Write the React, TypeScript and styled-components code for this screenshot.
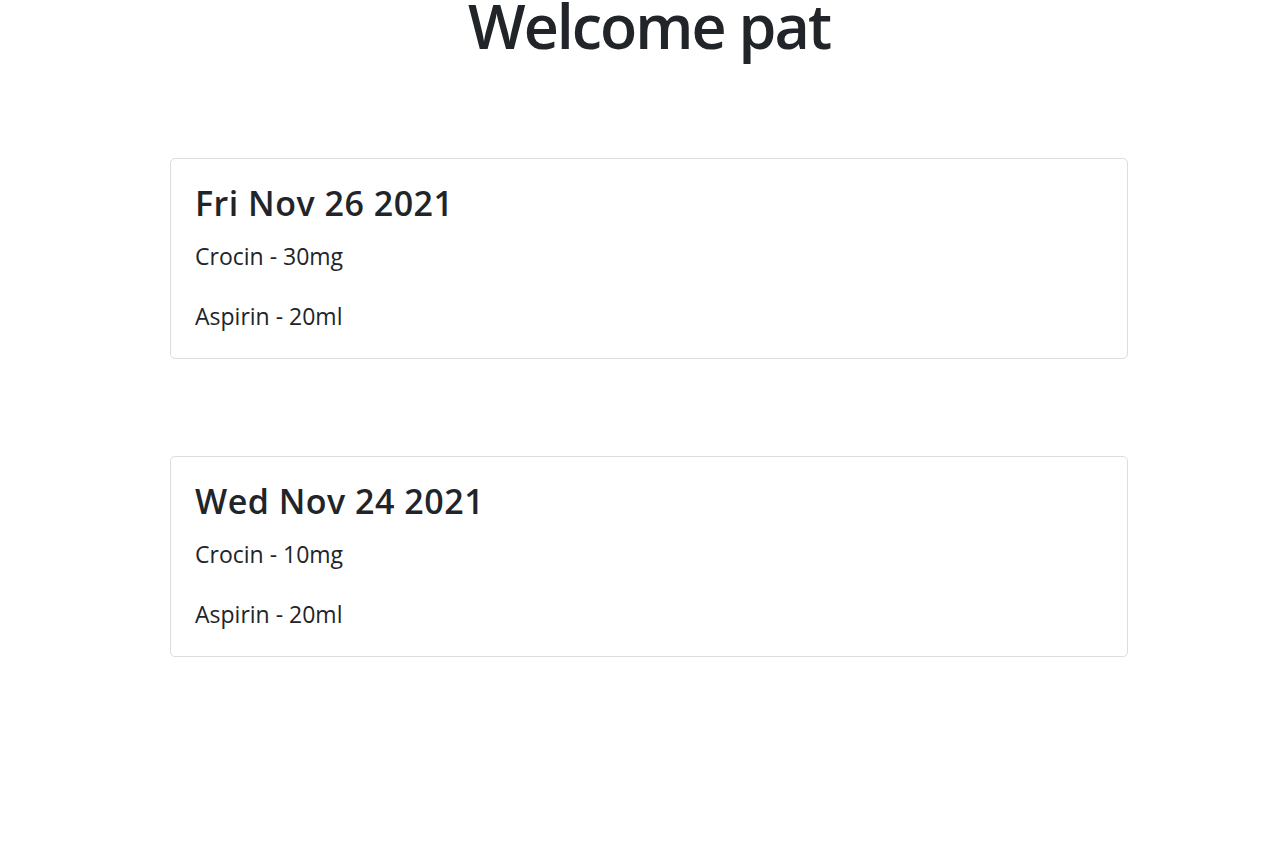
import React from "react";
import styled, { createGlobalStyle } from "styled-components";

const Global = createGlobalStyle`
  html, body { margin: 0; padding: 0; background: #fff; }
  body {
    font-family: "Open Sans", "Noto Sans", sans-serif;
    color: #212529;
    -webkit-font-smoothing: antialiased;
  }
`;

const Page = styled.div`
  padding-left: 18px;
  display: flex;
  justify-content: center;
`;

const Content = styled.div`
  width: 958px;
  display: flex;
  flex-direction: column;
`;

const Title = styled.h1`
  margin: 0;
  font-size: 61px;
  font-weight: 600;
  line-height: 52px;
  text-align: center;
  letter-spacing: -2px;
`;

const List = styled.div`
  margin-top: 106px;
  display: flex;
  flex-direction: column;
  gap: 97px;
`;

const Card = styled.div`
  border: 1px solid rgba(0, 0, 0, 0.135);
  border-radius: 5px;
  padding: 24px 24px 27px;
  display: flex;
  flex-direction: column;
`;

const DateTitle = styled.h2`
  margin: 0 0 18px;
  font-size: 34px;
  font-weight: 600;
  line-height: 40px;
  letter-spacing: 0.5px;
`;

const Meds = styled.div`
  display: flex;
  flex-direction: column;
  gap: 30px;
`;

const Med = styled.p`
  margin: 0;
  font-size: 23px;
  line-height: 30px;
  font-weight: 400;
`;

const data = [
  { date: "Fri Nov 26 2021", meds: ["Crocin - 30mg", "Aspirin - 20ml"] },
  { date: "Wed Nov 24 2021", meds: ["Crocin - 10mg", "Aspirin - 20ml"] },
];

export default function App() {
  return (
    <>
      <Global />
      <Page>
        <Content>
          <Title>Welcome pat</Title>
          <List>
            {data.map((d) => (
              <Card key={d.date}>
                <DateTitle>{d.date}</DateTitle>
                <Meds>
                  {d.meds.map((m) => (
                    <Med key={m}>{m}</Med>
                  ))}
                </Meds>
              </Card>
            ))}
          </List>
        </Content>
      </Page>
    </>
  );
}
